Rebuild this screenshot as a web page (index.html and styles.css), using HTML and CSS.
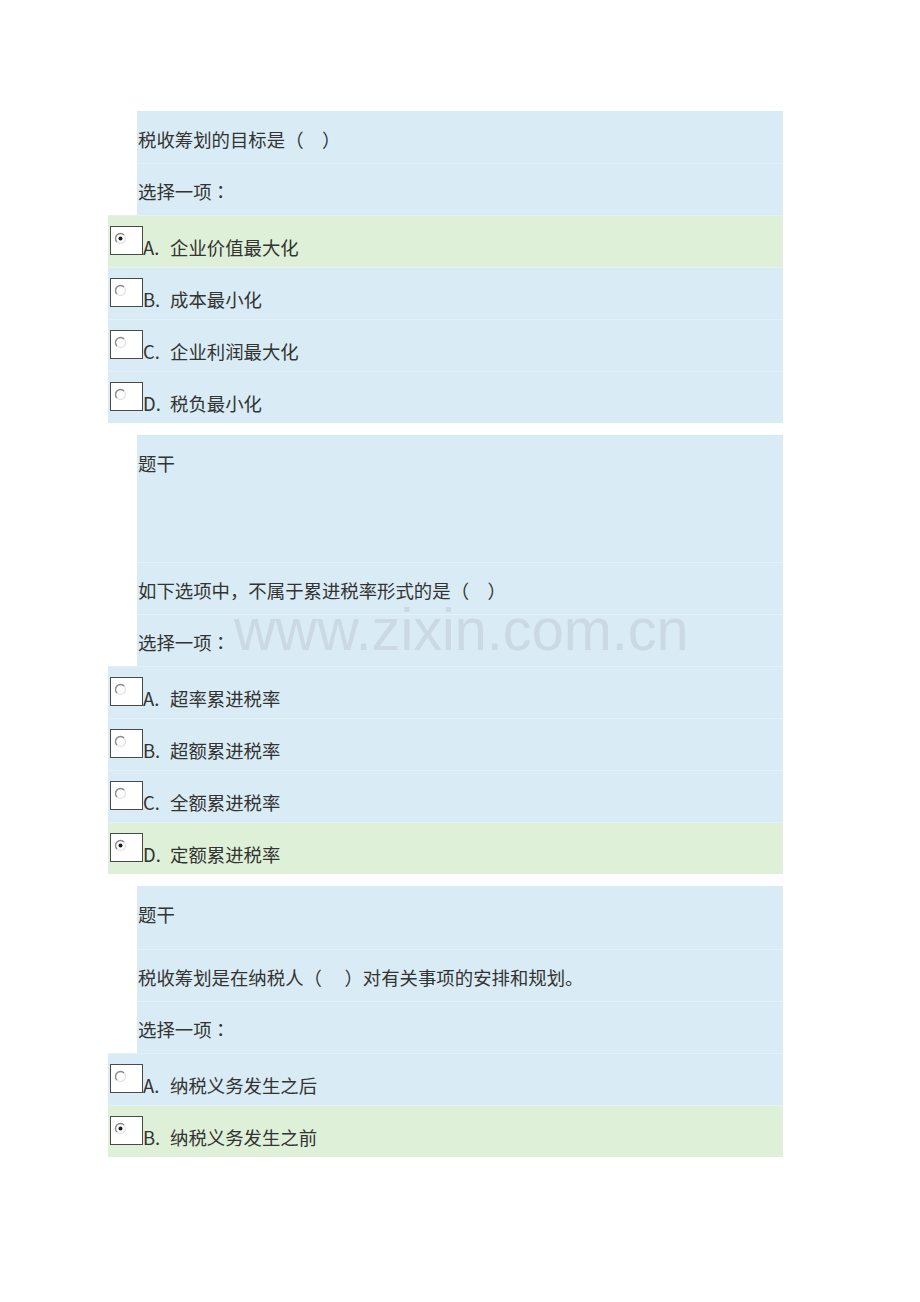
FILE: index.html
```html
<!DOCTYPE html>
<html lang="zh-CN">
<head>
<meta charset="utf-8">
<title>税收筹划</title>
<link rel="stylesheet" href="styles.css">
</head>
<body>
<div class="page">

  <div class="block">
    <div class="row q">税收筹划的目标是（　）</div>
    <div class="row q">选择一项<span class="colon" lang="zh-Hant-TW">：</span></div>
    <div class="row opt sel"><span class="rb"><svg width="13" height="13" viewBox="0 0 13 13"><circle cx="6.5" cy="6.5" r="5" fill="#fff" stroke="#e4e4e4" stroke-width="1.3"/><path d="M2.96 10.04 A5 5 0 0 1 10.04 2.96" fill="none" stroke="#8a8a8a" stroke-width="1.3"/><circle cx="6.5" cy="6.5" r="2" fill="#1a1a1a"/></svg></span><span class="lt">A.</span>企业价值最大化</div>
    <div class="row opt"><span class="rb"><svg width="13" height="13" viewBox="0 0 13 13"><circle cx="6.5" cy="6.5" r="5" fill="#fff" stroke="#e4e4e4" stroke-width="1.3"/><path d="M2.96 10.04 A5 5 0 0 1 10.04 2.96" fill="none" stroke="#8a8a8a" stroke-width="1.3"/></svg></span><span class="lt">B.</span>成本最小化</div>
    <div class="row opt"><span class="rb"><svg width="13" height="13" viewBox="0 0 13 13"><circle cx="6.5" cy="6.5" r="5" fill="#fff" stroke="#e4e4e4" stroke-width="1.3"/><path d="M2.96 10.04 A5 5 0 0 1 10.04 2.96" fill="none" stroke="#8a8a8a" stroke-width="1.3"/></svg></span><span class="lt">C.</span>企业利润最大化</div>
    <div class="row opt"><span class="rb"><svg width="13" height="13" viewBox="0 0 13 13"><circle cx="6.5" cy="6.5" r="5" fill="#fff" stroke="#e4e4e4" stroke-width="1.3"/><path d="M2.96 10.04 A5 5 0 0 1 10.04 2.96" fill="none" stroke="#8a8a8a" stroke-width="1.3"/></svg></span><span class="lt">D.</span>税负最小化</div>
  </div>

  <div class="block">
    <div class="row q stem-tall">题干</div>
    <div class="row q">如下选项中，不属于累进税率形式的是（　）</div>
    <div class="row q">选择一项<span class="colon" lang="zh-Hant-TW">：</span></div>
    <div class="row opt"><span class="rb"><svg width="13" height="13" viewBox="0 0 13 13"><circle cx="6.5" cy="6.5" r="5" fill="#fff" stroke="#e4e4e4" stroke-width="1.3"/><path d="M2.96 10.04 A5 5 0 0 1 10.04 2.96" fill="none" stroke="#8a8a8a" stroke-width="1.3"/></svg></span><span class="lt">A.</span>超率累进税率</div>
    <div class="row opt"><span class="rb"><svg width="13" height="13" viewBox="0 0 13 13"><circle cx="6.5" cy="6.5" r="5" fill="#fff" stroke="#e4e4e4" stroke-width="1.3"/><path d="M2.96 10.04 A5 5 0 0 1 10.04 2.96" fill="none" stroke="#8a8a8a" stroke-width="1.3"/></svg></span><span class="lt">B.</span>超额累进税率</div>
    <div class="row opt"><span class="rb"><svg width="13" height="13" viewBox="0 0 13 13"><circle cx="6.5" cy="6.5" r="5" fill="#fff" stroke="#e4e4e4" stroke-width="1.3"/><path d="M2.96 10.04 A5 5 0 0 1 10.04 2.96" fill="none" stroke="#8a8a8a" stroke-width="1.3"/></svg></span><span class="lt">C.</span>全额累进税率</div>
    <div class="row opt sel"><span class="rb"><svg width="13" height="13" viewBox="0 0 13 13"><circle cx="6.5" cy="6.5" r="5" fill="#fff" stroke="#e4e4e4" stroke-width="1.3"/><path d="M2.96 10.04 A5 5 0 0 1 10.04 2.96" fill="none" stroke="#8a8a8a" stroke-width="1.3"/><circle cx="6.5" cy="6.5" r="2" fill="#1a1a1a"/></svg></span><span class="lt">D.</span>定额累进税率</div>
  </div>

  <div class="block">
    <div class="row q stem">题干</div>
    <div class="row q">税收筹划是在纳税人（　 ）对有关事项的安排和规划。</div>
    <div class="row q">选择一项<span class="colon" lang="zh-Hant-TW">：</span></div>
    <div class="row opt"><span class="rb"><svg width="13" height="13" viewBox="0 0 13 13"><circle cx="6.5" cy="6.5" r="5" fill="#fff" stroke="#e4e4e4" stroke-width="1.3"/><path d="M2.96 10.04 A5 5 0 0 1 10.04 2.96" fill="none" stroke="#8a8a8a" stroke-width="1.3"/></svg></span><span class="lt">A.</span>纳税义务发生之后</div>
    <div class="row opt sel"><span class="rb"><svg width="13" height="13" viewBox="0 0 13 13"><circle cx="6.5" cy="6.5" r="5" fill="#fff" stroke="#e4e4e4" stroke-width="1.3"/><path d="M2.96 10.04 A5 5 0 0 1 10.04 2.96" fill="none" stroke="#8a8a8a" stroke-width="1.3"/><circle cx="6.5" cy="6.5" r="2" fill="#1a1a1a"/></svg></span><span class="lt">B.</span>纳税义务发生之前</div>
  </div>

  <div class="wm">www.zixin.com.cn</div>
</div>
</body>
</html>
```

FILE: styles.css
```css
* {
  box-sizing: border-box;
}

body {
  margin: 0;
  background: #ffffff;
  font-family: "Noto Sans CJK SC", "Noto Sans", sans-serif;
  font-size: 18.4px;
  color: #333333;
}

.page {
  position: relative;
  width: 920px;
  height: 1302px;
  padding: 111px 0 0 108px;
  overflow: hidden;
}

.block {
  width: 675px;
  margin-bottom: 12px;
}

.row {
  height: 52px;
  white-space: nowrap;
}

.row + .row {
  box-shadow: inset 0 1px 0 #e3f1f8;
}

.q {
  margin-left: 29px;
  background: #d9ecf5;
  padding: 10px 0 0 1px;
  line-height: 36px;
}

.q.stem-tall {
  height: 127px;
}

.q.stem {
  height: 63px;
}

.colon {
  font-family: "Noto Sans CJK TC", "Noto Sans CJK SC", sans-serif;
}

.opt {
  background: #d9ecf5;
  padding: 11px 0 0 2px;
  line-height: 20px;
}

.opt.sel {
  background: #dff0d8;
}

.rb {
  display: inline-block;
  width: 33px;
  height: 29px;
  border: 1px solid #4a4a4a;
  background: #ffffff;
  padding: 5px 0 0 3px;
  vertical-align: baseline;
}

.rb svg {
  display: block;
}

.lt {
  display: inline-block;
  width: 27px;
}

.wm {
  position: absolute;
  left: 234px;
  top: 610px;
  font-family: "Liberation Sans", Arial, sans-serif;
  font-size: 60px;
  line-height: 40px;
  color: #cad9e2;
  white-space: nowrap;
  transform: scaleX(0.96);
  transform-origin: 0 0;
}
```
